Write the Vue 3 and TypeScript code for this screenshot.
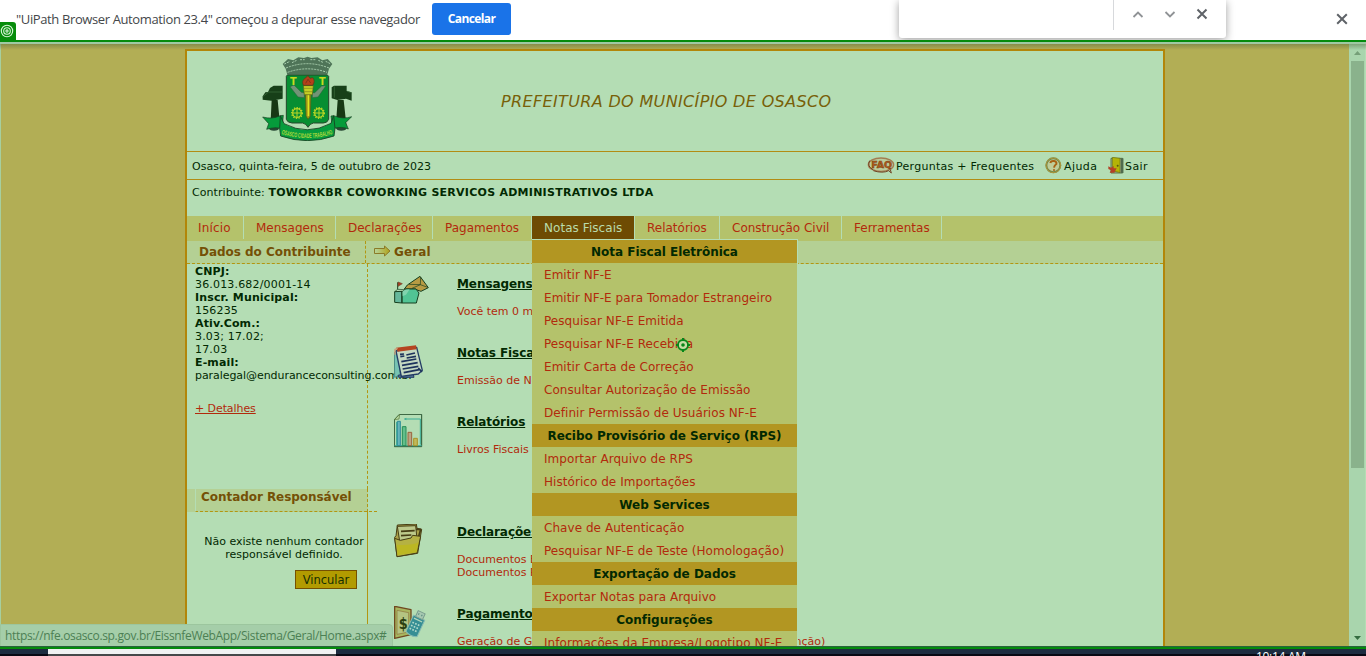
<script setup lang="ts">
interface Tab { label: string; cls: string }
interface MenuRow { text: string; head?: boolean }
interface Item { title: string; lines: string[]; icon: string; box: string; cls: string }

const tabs: Tab[] = [
  { label: 'Início', cls: 't1' },
  { label: 'Mensagens', cls: 't2' },
  { label: 'Declarações', cls: 't3' },
  { label: 'Pagamentos', cls: 't4' },
  { label: 'Notas Fiscais', cls: 't5 active' },
  { label: 'Relatórios', cls: 't6' },
  { label: 'Construção Civil', cls: 't7' },
  { label: 'Ferramentas', cls: 't8' },
]

const menu: MenuRow[] = [
  { text: 'Nota Fiscal Eletrônica', head: true },
  { text: 'Emitir NF-E' },
  { text: 'Emitir NF-E para Tomador Estrangeiro' },
  { text: 'Pesquisar NF-E Emitida' },
  { text: 'Pesquisar NF-E Recebida' },
  { text: 'Emitir Carta de Correção' },
  { text: 'Consultar Autorização de Emissão' },
  { text: 'Definir Permissão de Usuários NF-E' },
  { text: 'Recibo Provisório de Serviço (RPS)', head: true },
  { text: 'Importar Arquivo de RPS' },
  { text: 'Histórico de Importações' },
  { text: 'Web Services', head: true },
  { text: 'Chave de Autenticação' },
  { text: 'Pesquisar NF-E de Teste (Homologação)' },
  { text: 'Exportação de Dados', head: true },
  { text: 'Exportar Notas para Arquivo' },
  { text: 'Configurações', head: true },
  { text: 'Informações da Empresa/Logotipo NF-E' },
]

const items: Item[] = [
  { title: 'Mensagens', lines: ['Você tem 0 mensagens'], icon: 'mail', box: '72 33 108 102', cls: 'h69' },
  { title: 'Notas Fiscais', lines: ['Emissão de Notas Fiscais'], icon: 'notes', box: '72 240 108 102', cls: 'h69' },
  { title: 'Relatórios', lines: ['Livros Fiscais'], icon: 'chart', box: '72 447 108 102', cls: 'h110' },
  { title: 'Declarações', lines: ['Documentos Emitidos', 'Documentos Recebidos'], icon: 'folder', box: '642 132 108 102', cls: 'h82' },
  { title: 'Pagamentos', lines: ['Geração de Guias de Pagamento (Própria, do Tomador e Retenção)'], icon: 'money', box: '642 378 108 102', cls: 'h82' },
]
</script>

<template>
  <div class="screen">
    <header class="infobar">
      <span class="msg">"UiPath Browser Automation 23.4" começou a depurar esse navegador</span>
      <button class="cancel">Cancelar</button>
      <svg class="close" width="12" height="12" viewBox="0 0 12 12"><path d="M1.2 1.2 10.8 10.8M10.8 1.2 1.2 10.8" stroke="#5f6368" stroke-width="2" fill="none" /></svg>
    </header>
    <div class="badge">
      <svg width="14" height="14" viewBox="0 0 14 14" fill="none" stroke="#d8f5d8" stroke-width="1.1"><circle cx="7" cy="7" r="5.7" /><circle cx="7" cy="7" r="3.3" /><circle cx="7" cy="7" r="1.1" /></svg>
    </div>
    <div class="find">
      <div class="field"></div>
      <svg width="112" height="30" viewBox="0 0 112 30" fill="none">
        <path d="M18.500 17 23 12.500 27.500 17M50.500 12 55 16.500 59.500 12" stroke="#909396" stroke-width="1.8" />
        <path d="M82.500 9.500 91.500 18.500M91.500 9.500 82.500 18.500" stroke="#5f6368" stroke-width="2" />
      </svg>
    </div>

    <main class="viewport">
      <div class="page">
        <div class="banner">
          <svg class="arms" width="90" height="86" viewBox="36 15 270 258">
            <path d="M98 42 114 27 130 31 145 22 162 24 173 20 184 24 203 22 217 31 233 27 247 42 237 56 232 74H112L107 56Z" fill="#4f7458" />
            <path d="M103 42 120 34M126 38 142 30M150 29H164M181 29H197M205 31 221 38M227 34 243 42M108 54Q172 28 237 54M113 67Q172 46 231 67" stroke="#a9cfae" stroke-width="3" stroke-dasharray="6 3" fill="none" />
            <path d="M65 150H83L91 233H61ZM263 150H281L290 233H257Z" fill="#173814" />
            <path d="M54 126 60 114 71 107H98V146L64 152 38 149V139L46 127ZM245 126V112L252 107H290V123L305 127V152L288 146 262 150 245 145Z" fill="#173f18" />
            <path d="M38 140 56 126H97M253 109V143M290 123 304 129" stroke="#3c703e" stroke-width="2" fill="none" />
            <g fill="#284734"><ellipse cx="72" cy="234" rx="15" ry="8" /><ellipse cx="274" cy="234" rx="16" ry="8" /></g>
            <path d="M112 75H232L236 79V208Q232 219 220 219H190Q179 221 174 232 169 221 158 219H126Q112 218 109 208V79Z" fill="#078e32" stroke="#24472b" stroke-width="3" />
            <path d="M120 110 132 105 154 127 163 128V143L144 141ZM228 107 215 108 194 128 187 128V143L204 141Z" fill="#719476" stroke="#285c36" stroke-width="1.500" />
            <path d="M166 125H183L181 198 174 208 168 198Z" fill="#a39a19" stroke="#4e5a12" stroke-width="2" /><path d="M175 127V198" stroke="#dde51f" stroke-width="4" />
            <path d="M160 107H190L187 134H163Z" fill="#c5cf25" stroke="#59601a" stroke-width="2" /><path d="M162 115H189M163 125H188" stroke="#7d811a" stroke-width="2" />
            <path d="M160 106Q154 92 165 85L174 77 180 85 188 83Q197 93 188 106Z" fill="#b3401a" stroke="#5b3617" stroke-width="2" /><path d="M167 100 174 88 182 99" stroke="#6b2916" stroke-width="2" fill="none" />
            <g fill="#c7da20" font-family="DejaVu Sans" font-weight="bold" font-size="29"><text x="120" y="105">T</text><text x="207" y="105">T</text></g>
            <g fill="none" stroke="#b9d726"><g stroke-width="4"><circle cx="141" cy="189" r="13" /><circle cx="207" cy="189" r="13" /></g><g stroke-width="4" stroke-dasharray="4 4"><circle cx="141" cy="189" r="16" /><circle cx="207" cy="189" r="16" /></g><path d="M128 189H154M141 176V202M194 189H220M207 176V202" stroke-width="3" /></g>
            <path d="M38 201Q66 209 91 197L100 196 96 237Q78 229 50 238L56 221ZM305 200Q280 209 251 197L243 198 248 236Q276 228 295 237L287 218Z" fill="#069b3b" stroke="#173c20" stroke-width="2" />
            <path d="M91 197 102 221Q172 258 243 220L251 197 255 235 252 258Q172 286 92 258L89 236Z" fill="#069c3d" stroke="#163d20" stroke-width="2.500" />
            <path id="ribbon" d="M94 252Q172 277 251 251" fill="none" />
            <text fill="#b0da3b" font-family="Liberation Sans Narrow, Liberation Sans" font-weight="bold" font-size="20"><textPath href="#ribbon" textLength="157" lengthAdjust="spacingAndGlyphs">OSASCO CIDADE TRABALHO</textPath></text>
          </svg>
          <h1>PREFEITURA DO MUNICÍPIO DE OSASCO</h1>
        </div>

        <div class="daterow">
          <span class="date">Osasco, quinta-feira, 5 de outubro de 2023</span>
          <svg class="faq" width="28" height="17" viewBox="80 51 84 51">
            <ellipse cx="122" cy="74" rx="38" ry="20" fill="#bccb9b" stroke="#a47c50" stroke-width="4" />
            <path d="M88 62Q79 79 98 89M99 92Q127 101 145 92M145 92 153 99 150 89" stroke="#704222" stroke-width="3" fill="none" />
            <text x="93" y="84" font-family="DejaVu Sans" font-weight="bold" font-size="27" textLength="62" lengthAdjust="spacingAndGlyphs" fill="#b35a17" stroke="#763e16" stroke-width="1.500">FAQ</text>
          </svg>
          <a class="l1">Perguntas + Frequentes</a>
          <svg class="help" width="17" height="17" viewBox="614 50 51 51">
            <circle cx="639" cy="75" r="21" fill="#bfcd99" stroke="#718849" stroke-width="6" /><circle cx="639" cy="75" r="22" fill="none" stroke="#bd9835" stroke-width="2.500" />
            <path d="M630 68Q631 61 641 62 650 64 648 71 642 75 641 82M641 87V91" stroke="#a66213" stroke-width="6" fill="none" />
          </svg>
          <a class="l2">Ajuda</a>
          <svg class="door" width="16" height="17" viewBox="803 48 48 51">
            <path d="M812 52H847V96H812Z" fill="#a6b6a0" stroke="#587647" stroke-width="3" /><path d="M841 52H849V96H841Z" fill="#4f6a4d" /><path d="M816 49 839 52V95L816 89Z" fill="#b4b306" stroke="#686f10" stroke-width="2" /><circle cx="832" cy="74" r="3" fill="#565a10" /><path d="M804 76 812 80 820 75V82H829L822 95H808L812 88 804 84Z" fill="#b44126" />
          </svg>
          <a class="l3">Sair</a>
        </div>

        <div class="payer">Contribuinte: <b>TOWORKBR COWORKING SERVICOS ADMINISTRATIVOS LTDA</b></div>

        <nav class="tabs">
          <a v-for="t in tabs" :key="t.label" class="tab" :class="t.cls"><span>{{ t.label }}</span></a>
        </nav>

        <div class="subhead">
          <div class="sub-left">Dados do Contribuinte</div>
          <svg width="17" height="12" viewBox="0 0 17 12"><defs><linearGradient id="arrow"><stop stop-color="#b8d69a" /><stop offset="1" stop-color="#b0a119" /></linearGradient></defs><path d="M.5 3.500H10.500V1L16 6 10.500 11V8.500H.5Z" fill="url(#arrow)" stroke="#8b7a28" /></svg>
          <div class="sub-right">Geral</div>
        </div>

        <div class="columns">
          <aside>
            <div class="data">
              <b>CNPJ:</b><span class="num">36.013.682/0001-14</span>
              <b>Inscr. Municipal:</b><span class="num">156235</span>
              <b>Ativ.Com.:</b><span class="num">3.03; 17.02;</span><span class="num">17.03</span>
              <b>E-mail:</b><span class="email">paralegal@enduranceconsulting.com.br</span>
              <a>+ Detalhes</a>
            </div>
            <div class="acct-head"><span>Contador Responsável</span></div>
            <div class="acct">
              <p>Não existe nenhum contador<br>responsável definido.</p>
              <button>Vincular</button>
            </div>
          </aside>
          <section class="items">
            <article v-for="it in items" :key="it.title" :class="it.cls">
              <svg width="36" height="34" :viewBox="it.box" stroke-linejoin="round">
                <g v-if="it.icon === 'mail'" stroke="#173f20" stroke-width="3">
                  <path d="M103 72 112 60 150 34 175 68 153 79 144 76 136 72Z" fill="#b79b43" /><path d="M117 58 151 59 152 36M151 59 173 67M126 70 151 59" fill="none" stroke-width="2" />
                  <path d="M74 80 96 79V114L74 112Z" fill="#65b79b" /><path d="M96 80 108 72 138 72 147 84 139 114H96Z" fill="#51c494" /><path d="M96 82 103 74 119 73 108 89 97 94Z" fill="#80d4ae" stroke="none" /><path d="M74 80 83 73 105 74M96 80V114" fill="none" stroke-width="2" />
                  <path d="M83 73V52" /><path d="M84 51 97 56 84 64Z" fill="#ac3e22" stroke="#70452c" stroke-width="2" />
                </g>
                <g v-else-if="it.icon === 'notes'">
                  <path d="M73 263 84 252 91 331 74 337Z" fill="#77c3b3" stroke="#4b8b83" stroke-width="3" /><path d="M84 331 128 321 132 337H86Z" fill="#557596" stroke="#253c65" stroke-width="3" /><path d="M78 258 140 247 157 316 145 327 94 334Z" fill="#c4d8c1" stroke="#233d65" stroke-width="4" /><path d="M78 248 138 241 140 253 83 260Z" fill="#b54420" /><path d="M75 269V253L83 250" fill="none" stroke="#cd9b77" stroke-width="4" />
                  <path d="M90 268 102 267M91 275 103 273M109 270 135 264M110 279 138 274M94 290 139 282M96 301 143 293M98 312 145 304M101 323 148 314M145 309 156 321" fill="none" stroke="#1e335c" stroke-width="5" />
                </g>
                <g v-else-if="it.icon === 'chart'" fill="none">
                  <path d="M88 448H155V545H73V464Z" stroke="#285431" stroke-width="3" /><path d="M73 464 87 462 89 448Z" fill="#b6d9a0" stroke="#54743a" stroke-width="2" /><path d="M103 462H151V539M80 471V542M74 542H155" stroke="#39ad96" stroke-width="3" /><path d="M103 462 109 458V466Z" fill="#39ad96" />
                  <path d="M82 469H91V542H82Z" fill="#67b4bb" stroke="#2d8c98" stroke-width="3" /><path d="M97 485H108V542H97Z" fill="#62be8b" stroke="#278d56" stroke-width="3" /><path d="M114 502H125V542H114Z" fill="#baa483" stroke="#9a643d" stroke-width="3" /><path d="M131 520H142V542H131Z" fill="#c1b95a" stroke="#a89428" stroke-width="3" />
                </g>
                <g v-else-if="it.icon === 'folder'" stroke="#463d14" stroke-width="3">
                  <path d="M644 172 648 167 652 135 709 132 711 145 725 148 713 220 651 230Z" fill="#aaa24a" /><path d="M652 139 707 137 712 187 660 190Z" fill="#bdc98a" /><path d="M663 154 704 152M663 167 694 165M708 148H722L716 170" fill="none" stroke-width="5" /><path d="M644 175 661 181 693 174 698 166 722 169 711 219 651 230Z" fill="#b5b143" /><path d="M650 194Q691 198 716 187L711 217 652 226Z" fill="#c2bb0f" stroke="none" opacity=".6" />
                </g>
                <g v-else>
                  <path d="M644 379 693 389V464L644 475Z" fill="#a8b65f" stroke="#704820" stroke-width="4" /><path d="M651 391 686 398V456L651 463Z" fill="#b4c482" stroke="#8d713b" stroke-width="2" /><text x="656" y="446" font-family="DejaVu Sans" font-weight="bold" font-size="46" textLength="27" lengthAdjust="spacingAndGlyphs" fill="#2b3f10">$</text>
                  <g transform="rotate(25 710 435)"><path d="M689 412H726V466Q708 476 689 466Z" fill="#368e94" stroke="#88bcb3" stroke-width="3" /><path d="M696 394H719V413H696Z" fill="#a8c9b2" stroke="#789b8d" stroke-width="3" /><path d="M702 400V405M712 400V405" stroke="#55877b" stroke-width="3" /><path d="M694 420H721" stroke="#b4d7b9" stroke-width="4" /><path d="M695 433H721M695 443H721M695 453H721" stroke="#b3dacb" stroke-width="5" stroke-dasharray="5 4" /></g>
                </g>
              </svg>
              <div class="txt"><h2>{{ it.title }}</h2><p v-for="l in it.lines" :key="l">{{ l }}</p></div>
            </article>
          </section>
        </div>
      </div>

      <div class="dropdown">
        <div v-for="m in menu" :key="m.text" :class="m.head ? 'mhead' : 'mitem'"><span>{{ m.text }}</span></div>
      </div>
      <svg class="target" width="14" height="14" viewBox="0 0 14 14"><circle cx="7" cy="7" r="5" fill="#c6dba4" stroke="#078719" stroke-width="1.800" /><circle cx="7" cy="7" r="1.800" fill="#078719" /><path d="M7 0V3M7 11V14M0 7H3M11 7H14" stroke="#078719" stroke-width="2" /></svg>

      <div class="scrollbar">
        <svg width="16" height="16" viewBox="0 0 16 16"><path d="M5 11 8.500 7 12 11Z" fill="#759f78" /></svg>
        <div class="thumb"></div>
        <svg class="down" width="16" height="16" viewBox="0 0 16 16"><path d="M5 5H12L8.500 9Z" fill="#356c40" /></svg>
      </div>
      <div class="status">https://nfe.osasco.sp.gov.br/EissnfeWebApp/Sistema/Geral/Home.aspx#</div>
      <div class="shade"></div>
    </main>

    <footer class="taskbar"><div class="search"></div><span class="clock">10:14 AM</span></footer>
  </div>
</template>

<style>
body { margin: 0; overflow: hidden; }
</style>
<style scoped>
* { box-sizing: border-box; }
.screen { position: relative; width: 1366px; height: 656px; overflow: hidden; background: #fff; color: #022902; font: 11px/13px "DejaVu Sans", Verdana, sans-serif; white-space: nowrap; }
h1, h2, p { margin: 0; font-weight: normal; }
.infobar { height: 40px; display: flex; align-items: center; padding: 0 18px 2px 16px; font-family: "Open Sans", sans-serif; }
.msg { width: 416px; font-size: 13px; color: #44474a; letter-spacing: -.38px; }
.cancel { width: 79px; height: 32px; border: 0; border-radius: 3px; background: #1a73e8; color: #fff; font: bold 12px "Open Sans", sans-serif; letter-spacing: -.6px; padding: 0 0 1px; }
.close { margin-left: auto; }
.badge { position: absolute; left: 0; top: 22px; width: 16px; height: 19px; background: #078c0b; border-radius: 0 3px 0 0; padding-top: 2px; z-index: 4; }
.find { position: absolute; left: 899px; top: 0; width: 327px; height: 38px; display: flex; background: #fff; border-radius: 0 0 3px 3px; box-shadow: 0 2px 9px rgba(0, 0, 0, .38); z-index: 5; }
.field { width: 215px; height: 30px; border-right: 1px solid #d7d9dc; flex: none; }
.find svg { flex: none; margin-left: 1px; }

.viewport { position: relative; height: 609px; border-top: 2px solid #048b0c; border-bottom: 2px solid #048b0c; background: #b2ae55; overflow: hidden; padding-top: 7px; box-shadow: inset 1px 0 #a6cf9f, inset -1px 0 #b4ddb4; z-index: 6; }
.shade { position: absolute; inset: 0; background: linear-gradient(#9fc9a3 0 2px, rgba(80, 100, 60, .45) 2px, rgba(80, 100, 60, 0) 8px) top / 100% 8px no-repeat, linear-gradient(#29623d, #29623d) bottom / 100% 1px no-repeat; }
.page { margin-left: 185px; width: 980px; height: 620px; border: 2px solid #b28609; background: #b4ddb4; }
.banner { height: 101px; display: flex; align-items: center; border-bottom: 1px solid #b28c14; }
.arms { margin: -6px 0 0 75px; flex: none; }
.banner h1 { margin-left: 149px; font: italic 16px "DejaVu Sans", Verdana, sans-serif; letter-spacing: .35px; color: #786008; }
.daterow { height: 28px; display: flex; align-items: center; border-bottom: 1px solid #b28c14; padding-left: 5px; }
.date, .l1, .l2, .l3 { position: relative; top: 1px; flex: none; }
.date { width: 675px; letter-spacing: .05px; }
.daterow svg { flex: none; margin-top: -1px; }
.l1 { width: 148px; padding-left: 1px; margin-right: 2px; letter-spacing: .27px; }
.l2 { width: 43px; padding-left: 2px; margin-right: 3px; letter-spacing: .4px; }
.l3 { padding-left: 1px; letter-spacing: .4px; }
.payer { height: 36px; padding: 6px 0 0 5px; letter-spacing: .06px; }
.payer b { letter-spacing: .26px; }
.tabs { height: 25px; display: flex; background: #b4c26b; font-size: 12px; color: #b22a0c; }
.tab { height: 23px; line-height: 25px; border-right: 1px solid #b4ddb4; padding-left: 12px; }
.t1 { width: 57px; padding-left: 11px; letter-spacing: .15px; } .t2 { width: 92px; } .t3 { width: 97px; } .t4 { width: 99px; }
.t5 { width: 103px; letter-spacing: .06px; } .t6 { width: 85px; } .t7 { width: 122px; } .t8 { width: 100px; }
.active { background: #6e4b03; color: #b9dcac; }
.subhead { height: 23px; display: flex; align-items: center; border-bottom: 1px dashed #b29612; background: #b4d094; font-size: 12px; font-weight: bold; color: #755006; }
.sub-left { width: 179px; height: 22px; line-height: 23px; padding-left: 12px; border-right: 1px dashed #b29612; letter-spacing: -.03px; }
.subhead svg { margin: -2px 3px 0 8px; }
.sub-right { line-height: 22px; letter-spacing: .1px; }
.columns { display: flex; }
aside { width: 181px; height: 400px; flex: none; }
.data { height: 225px; padding: 1px 0 0 8px; border-right: 1px dashed #b29612; display: flex; flex-direction: column; align-items: flex-start; }
.data b { color: #022902; letter-spacing: .14px; }
.num { letter-spacing: .17px; }
.email { letter-spacing: -.06px; }
.data a { margin-top: 20px; color: #b22a0c; text-decoration: underline; letter-spacing: -.08px; }
.acct-head { height: 23px; display: flex; background: #b4d094; border-right: 1px dashed #b29612; padding-left: 8px; }
.acct-head span { flex: none; width: 182px; height: 23px; padding-left: 5px; line-height: 17px; border-left: 1px solid #b4ddb4; border-bottom: 1px dashed #b29612; font-size: 12px; font-weight: bold; letter-spacing: -.05px; color: #755006; }
.acct { height: 150px; padding: 23px 0 0 14px; border-right: 1px solid #b29612; text-align: center; }
.acct button { display: block; margin: 9px 0 0 94px; width: 62px; height: 19px; padding: 0; border: 1px solid #765000; background: #b29b00; color: #173000; font: 11.500px "DejaVu Sans", sans-serif; }
.items { flex: 1; }
article { display: flex; padding: 12px 0 0 26px; }
article svg { flex: none; margin-right: 27px; position: relative; }
.h69 { height: 69px; } .h110 { height: 110px; } .h82 { height: 82px; }
h2 { font: bold 12px/16px "DejaVu Sans", sans-serif; text-decoration: underline; margin-bottom: 13px; letter-spacing: -.08px; }
article p { color: #b22a0c; }

.dropdown { position: absolute; left: 532px; top: 197px; width: 266px; border-top: 1px solid #b4ddb4; border-right: 1px solid #b4ddb4; background: #b4c26b; font-size: 12px; line-height: 23px; }
.mhead { height: 23px; line-height: 25px; background: #b29622; text-align: center; font-weight: bold; letter-spacing: -.03px; }
.mitem { height: 23px; line-height: 25px; padding-left: 12px; color: #b22a0c; letter-spacing: .05px; }
.target { position: absolute; left: 676px; top: 296px; }
.scrollbar { position: absolute; right: 1px; top: 2px; width: 16px; height: 603px; background: #a9d5ad; display: flex; flex-direction: column; }
.thumb { width: 13px; height: 407px; margin-left: 2px; margin-top: 1px; background: #8ab28c; }
.down { margin-top: auto; }
.status { position: absolute; left: 0; top: 582px; width: 393px; height: 23px; background: #a5cea9; border: 1px solid #9cc69e; border-radius: 0 4px 0 0; padding-left: 4px; font: 12px/22px "Open Sans", sans-serif; letter-spacing: -.34px; color: #4c8054; }
.taskbar { position: relative; height: 7px; background: linear-gradient(#1d2c40 0 5px, #080914 5px); display: flex; overflow: hidden; }
.search { margin-left: 48px; width: 288px; background: linear-gradient(#f0f1f2 0 5px, #45484a 5px); }
.clock { margin-left: 920px; font: 12px/16px "Open Sans", sans-serif; letter-spacing: -.3px; color: #fff; }
</style>
